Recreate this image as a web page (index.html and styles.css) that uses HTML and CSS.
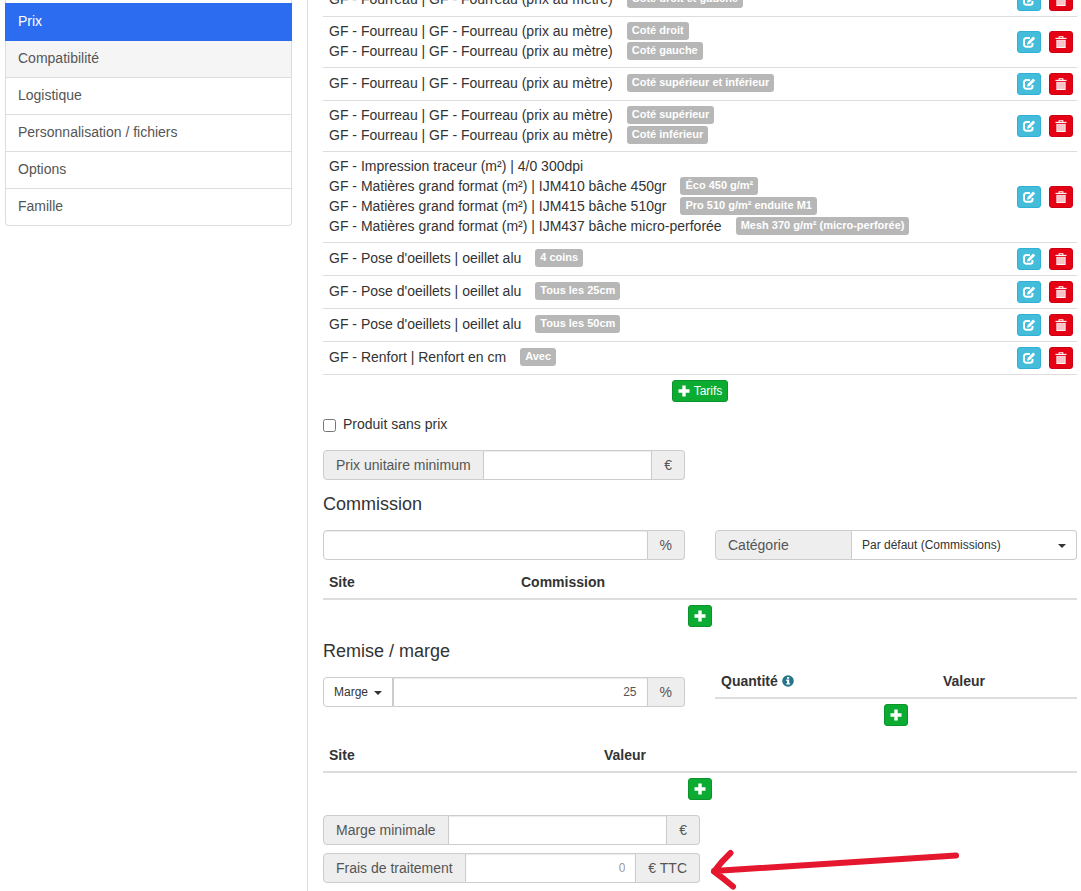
FILE: index.html
```html
<!DOCTYPE html>
<html lang="fr">
<head>
  <meta charset="UTF-8" />
  <meta name="viewport" content="width=device-width, initial-scale=1" />
  <title>Prix</title>
  <link rel="stylesheet" href="styles.css">
</head>
<body>
  <!-- Icons -->
  <svg class="sprite" aria-hidden="true">
    <symbol id="icon-edit" viewBox="0 0 13 12">
      <path d="M7.500 2H3.800A2.300 2.300 0 0 0 1.500 4.300v4.200a2.300 2.300 0 0 0 2.300 2.300h3.900A2.300 2.300 0 0 0 10 8.500V7" fill="none" stroke="currentColor" stroke-width="2"/>
      <path d="M4.500 8.700 5.200 5.900 10.700.4 12.700 2.400 7.300 7.900z" fill="currentColor"/>
    </symbol>
    <symbol id="icon-trash" viewBox="0 0 12 13">
      <path d="M4 2.200V.8h4v1.400" fill="none" stroke="currentColor" stroke-width="1.200"/>
      <path d="M0 2h12v1.200H0z" fill="currentColor"/>
      <path d="M1 4.200h10V13H1z" fill="currentColor"/>
      <path d="M2 4.600h8v7.400H2z" fill="#f6b6cb"/>
      <path d="M4 4.600V12M6 4.600V12M8 4.600V12" stroke="#f9d3c0" stroke-width="1"/>
    </symbol>
    <symbol id="icon-plus" viewBox="0 0 12 12">
      <path d="M4.300.500h3.400v3.800H11.500v3.400H7.700V11.500H4.300V7.700H.5V4.300h3.800z" fill="currentColor"/>
    </symbol>
    <symbol id="icon-info" viewBox="0 0 12 12">
      <circle cx="6" cy="6" r="5.800" fill="currentColor"/>
      <path d="M5 2h2.200v1.700H5zM4.200 4.600h3v3.600h.9v1.300H4.200V8.200h.9V5.900h-.9z" fill="#fff"/>
    </symbol>
  </svg>

  <div class="page">
    <aside class="sidebar">
      <nav class="menu">
        <a href="#" class="active">Prix</a>
        <a href="#" class="hover">Compatibilité</a>
        <a href="#">Logistique</a>
        <a href="#">Personnalisation / fichiers</a>
        <a href="#">Options</a>
        <a href="#">Famille</a>
      </nav>
    </aside>

    <main>
      <table class="table prices">
        <tbody>
          <tr>
            <td>
              <div class="line">GF - Fourreau | GF - Fourreau (prix au mètre) <span class="badge">Coté droit et gauche</span></div>
            </td>
            <td class="actions">
              <button class="btn btn-info" aria-label="Modifier"><svg><use href="#icon-edit"/></svg></button>
              <button class="btn btn-danger" aria-label="Supprimer"><svg><use href="#icon-trash"/></svg></button>
            </td>
          </tr>
          <tr>
            <td>
              <div class="line">GF - Fourreau | GF - Fourreau (prix au mètre) <span class="badge">Coté droit</span></div>
              <div class="line">GF - Fourreau | GF - Fourreau (prix au mètre) <span class="badge">Coté gauche</span></div>
            </td>
            <td class="actions">
              <button class="btn btn-info" aria-label="Modifier"><svg><use href="#icon-edit"/></svg></button>
              <button class="btn btn-danger" aria-label="Supprimer"><svg><use href="#icon-trash"/></svg></button>
            </td>
          </tr>
          <tr>
            <td>
              <div class="line">GF - Fourreau | GF - Fourreau (prix au mètre) <span class="badge">Coté supérieur et inférieur</span></div>
            </td>
            <td class="actions">
              <button class="btn btn-info" aria-label="Modifier"><svg><use href="#icon-edit"/></svg></button>
              <button class="btn btn-danger" aria-label="Supprimer"><svg><use href="#icon-trash"/></svg></button>
            </td>
          </tr>
          <tr>
            <td>
              <div class="line">GF - Fourreau | GF - Fourreau (prix au mètre) <span class="badge">Coté supérieur</span></div>
              <div class="line">GF - Fourreau | GF - Fourreau (prix au mètre) <span class="badge">Coté inférieur</span></div>
            </td>
            <td class="actions">
              <button class="btn btn-info" aria-label="Modifier"><svg><use href="#icon-edit"/></svg></button>
              <button class="btn btn-danger" aria-label="Supprimer"><svg><use href="#icon-trash"/></svg></button>
            </td>
          </tr>
          <tr>
            <td>
              <div class="line">GF - Impression traceur (m²) | 4/0 300dpi</div>
              <div class="line">GF - Matières grand format (m²) | IJM410 bâche 450gr <span class="badge">Éco 450 g/m²</span></div>
              <div class="line">GF - Matières grand format (m²) | IJM415 bâche 510gr <span class="badge">Pro 510 g/m² enduite M1</span></div>
              <div class="line">GF - Matières grand format (m²) | IJM437 bâche micro-perforée <span class="badge">Mesh 370 g/m² (micro-perforée)</span></div>
            </td>
            <td class="actions">
              <button class="btn btn-info" aria-label="Modifier"><svg><use href="#icon-edit"/></svg></button>
              <button class="btn btn-danger" aria-label="Supprimer"><svg><use href="#icon-trash"/></svg></button>
            </td>
          </tr>
          <tr>
            <td>
              <div class="line">GF - Pose d'oeillets | oeillet alu <span class="badge">4 coins</span></div>
            </td>
            <td class="actions">
              <button class="btn btn-info" aria-label="Modifier"><svg><use href="#icon-edit"/></svg></button>
              <button class="btn btn-danger" aria-label="Supprimer"><svg><use href="#icon-trash"/></svg></button>
            </td>
          </tr>
          <tr>
            <td>
              <div class="line">GF - Pose d'oeillets | oeillet alu <span class="badge">Tous les 25cm</span></div>
            </td>
            <td class="actions">
              <button class="btn btn-info" aria-label="Modifier"><svg><use href="#icon-edit"/></svg></button>
              <button class="btn btn-danger" aria-label="Supprimer"><svg><use href="#icon-trash"/></svg></button>
            </td>
          </tr>
          <tr>
            <td>
              <div class="line">GF - Pose d'oeillets | oeillet alu <span class="badge">Tous les 50cm</span></div>
            </td>
            <td class="actions">
              <button class="btn btn-info" aria-label="Modifier"><svg><use href="#icon-edit"/></svg></button>
              <button class="btn btn-danger" aria-label="Supprimer"><svg><use href="#icon-trash"/></svg></button>
            </td>
          </tr>
          <tr>
            <td>
              <div class="line">GF - Renfort | Renfort en cm <span class="badge">Avec</span></div>
            </td>
            <td class="actions">
              <button class="btn btn-info" aria-label="Modifier"><svg><use href="#icon-edit"/></svg></button>
              <button class="btn btn-danger" aria-label="Supprimer"><svg><use href="#icon-trash"/></svg></button>
            </td>
          </tr>
          <tr>
            <td colspan="2" class="add">
              <button class="btn btn-success"><svg><use href="#icon-plus"/></svg>Tarifs</button>
            </td>
          </tr>
        </tbody>
      </table>

      <label class="checkbox"><input type="checkbox" /> Produit sans prix</label>

      <div class="row">
        <div class="input-group">
          <label class="addon" for="prix-min">Prix unitaire minimum</label>
          <input type="text" id="prix-min" />
          <span class="addon">€</span>
        </div>
      </div>

      <h4>Commission</h4>
      <div class="row">
        <div class="input-group">
          <input type="text" id="commission" aria-label="Commission" />
          <span class="addon">%</span>
        </div>
        <div class="input-group">
          <label class="addon addon-wide" for="categorie">Catégorie</label>
          <div class="select">
            <select id="categorie">
              <option>Par défaut (Commissions)</option>
            </select>
          </div>
        </div>
      </div>

      <table class="table commission-sites">
        <thead>
          <tr><th>Site</th><th>Commission</th></tr>
        </thead>
        <tbody>
          <tr>
            <td colspan="2" class="add">
              <button class="btn btn-success" aria-label="Ajouter"><svg><use href="#icon-plus"/></svg></button>
            </td>
          </tr>
        </tbody>
      </table>

      <div class="row">
        <div>
          <h4 class="compact">Remise / marge</h4>
          <div class="input-group">
            <div class="select select-auto">
              <select aria-label="Type">
                <option>Marge</option>
              </select>
            </div>
            <input type="text" class="number" value="25" aria-label="Remise / marge" />
            <span class="addon">%</span>
          </div>
        </div>
        <div class="quantities">
          <table class="table">
            <thead>
              <tr><th>Quantité <svg class="info"><use href="#icon-info"/></svg></th><th>Valeur</th></tr>
            </thead>
            <tbody>
              <tr>
                <td colspan="2" class="add">
                  <button class="btn btn-success" aria-label="Ajouter"><svg><use href="#icon-plus"/></svg></button>
                </td>
              </tr>
            </tbody>
          </table>
        </div>
      </div>

      <table class="table margin-sites">
        <thead>
          <tr><th>Site</th><th>Valeur</th></tr>
        </thead>
        <tbody>
          <tr>
            <td colspan="2" class="add">
              <button class="btn btn-success" aria-label="Ajouter"><svg><use href="#icon-plus"/></svg></button>
            </td>
          </tr>
        </tbody>
      </table>

      <div class="fees">
        <div class="input-group">
          <label class="addon" for="marge-min">Marge minimale</label>
          <input type="text" id="marge-min" />
          <span class="addon">€</span>
        </div>
        <div class="input-group">
          <label class="addon" for="frais">Frais de traitement</label>
          <input type="text" id="frais" class="number" placeholder="0" />
          <span class="addon">€ TTC</span>
          <svg class="arrow" viewBox="0 0 254 43" aria-hidden="true">
            <path d="M248 7.500 6 23M22.500 5Q13 14 6 23.500Q15 30 25 38.500"/>
          </svg>
        </div>
      </div>
    </main>
  </div>
</body>
</html>
```
FILE: styles.css
```css
* {
  box-sizing: border-box;
}
body {
  margin: 0;
  font-family: Arial, "Liberation Sans", sans-serif;
  font-size: 14px;
  line-height: 20px;
  color: #333;
  background: #fff;
}
button, input, select {
  font-family: inherit;
}
.sprite {
  display: none;
}

.page {
  display: grid;
  grid-template-columns: 302px minmax(0, 1fr);
  min-height: 100vh;
  padding: 0 4px 0 5px;
  overflow: hidden;
}

/* Side menu */
.sidebar {
  padding-right: 15px;
}
.menu {
  padding-top: 3px;
  border: 1px solid #ddd;
  border-top: 0;
  border-radius: 0 0 4px 4px;
}
.menu a {
  display: block;
  padding: 7px 12px 9px;
  border-bottom: 1px solid #ddd;
  color: #555;
  text-decoration: none;
}
.menu a:last-child {
  border-bottom: 0;
}
.menu a.active {
  margin: 0 -1px;
  padding: 7px 13px 9px;
  border: 1px solid #2b6cf0;
  border-width: 1px 0;
  background: #2b6cf0;
  color: #fff;
}
.menu a.hover {
  background: #f5f5f5;
}

main {
  padding: 0 0 8px 15px;
  border-left: 1px solid #ddd;
}

/* Tables */
.table {
  width: 100%;
  border-collapse: separate;
  border-spacing: 0;
  table-layout: fixed;
}
.table th {
  padding: 5px 6px 6px;
  border-bottom: 2px solid #ddd;
  text-align: left;
}
.table td {
  padding: 5px;
}
.table td.add {
  text-align: center;
}
.prices {
  margin-top: -17px;
}
.prices td {
  border-top: 1px solid #ddd;
}
.prices td:first-child:not(.add) {
  padding: 4px 6px 6px;
}
.line {
  display: flex;
  gap: 14px;
}
.prices .actions {
  width: 80px;
  padding-right: 4px;
  text-align: right;
  font-size: 0;
  white-space: nowrap;
}
.actions .btn + .btn {
  margin-left: 8px;
}
.badge {
  height: 18px;
  margin-top: 1px;
  padding: 0 5px;
  border-radius: 3px;
  background: #b7b7b7;
  color: #fff;
  font-size: 11px;
  font-weight: 700;
  line-height: 16px;
  white-space: nowrap;
}
.commission-sites th:first-child {
  width: 192px;
}
.margin-sites th:first-child {
  width: 275px;
}
.quantities th:first-child {
  width: 222px;
}
.commission-sites {
  margin: 7px 0 9px;
}
.margin-sites {
  margin: 9px 0 10px;
}
.quantities {
  padding-top: 25px;
}
.info {
  width: 12px;
  height: 12px;
  color: #24748a;
  vertical-align: -1px;
}

/* Buttons */
.btn {
  display: inline-flex;
  align-items: center;
  justify-content: center;
  gap: 4px;
  height: 22px;
  padding: 0 5px;
  border: 1px solid;
  border-radius: 3px;
  color: #fff;
  font-size: 12px;
  line-height: 18px;
  vertical-align: top;
  cursor: pointer;
}
.btn svg {
  flex: none;
  width: 12px;
  height: 12px;
}
.btn-info {
  background: #44bdda;
  border-color: #31b0d5;
}
.btn-danger {
  background: #e60014;
  border-color: #cc0012;
}
.btn-success {
  background: #0cac32;
  border-color: #0a942b;
}
.actions .btn {
  width: 24px;
  padding: 0;
}
.actions .btn svg {
  width: 14px;
  height: 12px;
}

/* Forms */
h4 {
  margin: 14px 0 16px;
  font-size: 18px;
  font-weight: 400;
  line-height: 20px;
}
h4.compact {
  margin-top: 0;
}
.checkbox {
  display: flex;
  align-items: center;
  gap: 7px;
  margin: 7px 0 16px;
}
.checkbox input {
  width: 13px;
  height: 13px;
  margin: 2px 0 0;
}
.row {
  display: grid;
  grid-template-columns: repeat(2, minmax(0, 1fr));
  gap: 30px;
}
.input-group {
  position: relative;
  display: flex;
  height: 30px;
}
.addon {
  padding: 0 12px;
  border: 1px solid #ccc;
  background: #eee;
  color: #555;
  line-height: 28px;
  white-space: nowrap;
}
.addon-wide {
  flex: 0 0 137px;
}
.input-group input {
  flex: 1;
  min-width: 0;
  padding: 0 10px;
  border: 1px solid #ccc;
  border-radius: 0;
  box-shadow: inset 0 1px 1px rgba(0,0,0,0.08);
  color: #555;
  font-size: 12px;
}
.input-group .number {
  text-align: right;
}
.input-group input::placeholder {
  color: #999;
}
.input-group label + input,
.input-group label + .select select {
  border-left: 0;
}
.input-group input + .addon {
  border-left: 0;
}
.input-group > :first-child,
.select-auto select {
  border-radius: 4px 0 0 4px;
}
.input-group > span.addon,
.addon + .select select {
  border-radius: 0 4px 4px 0;
}
.select {
  position: relative;
  flex: 1;
}
.select select {
  width: 100%;
  height: 30px;
  padding: 0 23px 0 10px;
  border: 1px solid #ccc;
  background: #fff;
  color: #333;
  font-size: 12px;
  appearance: none;
}
.select::after {
  content: "";
  position: absolute;
  top: 14px;
  right: 11px;
  border: 4px solid transparent;
  border-top-color: #333;
  border-bottom: 0;
  pointer-events: none;
}
.select-auto {
  flex: none;
}

.fees {
  display: flex;
  flex-direction: column;
  gap: 8px;
  width: 50%;
}
.arrow {
  position: absolute;
  top: -5px;
  left: 100%;
  width: 254px;
  height: 43px;
  margin-left: 8px;
  fill: none;
  stroke: #e5172f;
  stroke-width: 6;
  stroke-linecap: round;
  stroke-linejoin: round;
}
```
